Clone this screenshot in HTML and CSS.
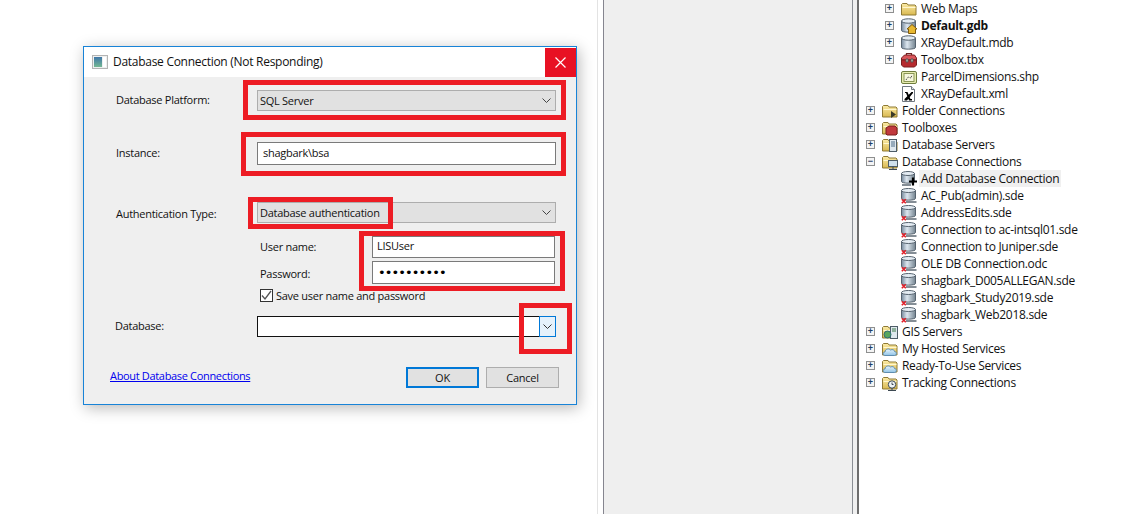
FILE: index.html
```html
<!DOCTYPE html>
<html>
<head>
  <title>Database Connection</title>
  <link rel="stylesheet" href="styles.css">
</head>
<body>
  <svg class="defs" width="0" height="0">
    <defs>
      <linearGradient id="gFolder" x1="0" y1="0" x2="0" y2="1">
        <stop offset="0" stop-color="#fbeba6"/><stop offset="1" stop-color="#d9b850"/>
      </linearGradient>
      <linearGradient id="gDb" x1="0" y1="0" x2="1" y2="0">
        <stop offset="0" stop-color="#76899c"/><stop offset=".4" stop-color="#dde7f0"/><stop offset="1" stop-color="#73838f"/>
      </linearGradient>
      <linearGradient id="gCloud" x1="0" y1="0" x2="0" y2="1">
        <stop offset="0" stop-color="#eaf5fc"/><stop offset="1" stop-color="#8fc3e6"/>
      </linearGradient>
      <linearGradient id="gApp" x1="0" y1="0" x2="0" y2="1">
        <stop offset="0" stop-color="#3f76a8"/><stop offset="1" stop-color="#74b893"/>
      </linearGradient>
      <symbol id="folder" viewBox="0 0 16 16">
        <path d="M.5 14V3.500l1-1h4.500l1 1.500h7l1 1v9z" fill="url(#gFolder)" stroke="#8f7a35"/>
        <path d="M1.500 6.500h13" stroke="#fff7cf" fill="none"/>
      </symbol>
      <symbol id="db" viewBox="0 0 16 16">
        <path d="M.5 3v9.500c0 2.200 14 2.200 14 0V3z" fill="url(#gDb)" stroke="#56636f"/>
        <ellipse cx="7.500" cy="3" rx="7" ry="2.200" fill="#e3ebf2" stroke="#56636f"/>
      </symbol>
      <symbol id="sde" viewBox="0 0 16 16">
        <path d="M.5 2.500v8c0 2.200 14 2.200 14 0v-8z" fill="url(#gDb)" stroke="#56636f"/>
        <ellipse cx="7.500" cy="2.500" rx="7" ry="2" fill="#e3ebf2" stroke="#56636f"/>
        <path d="M5 14h10.500" stroke="#66717b" stroke-width="1.600"/>
        <path d="M.8 11.300l4 4M4.800 11.300l-4 4" stroke="#e0202a" stroke-width="1.600"/>
      </symbol>
      <symbol id="addDb" viewBox="0 0 16 16">
        <path d="M.5 2.500v8c0 2.200 13 2.200 13 0v-8z" fill="url(#gDb)" stroke="#56636f"/>
        <ellipse cx="7" cy="2.500" rx="6.500" ry="2" fill="#e3ebf2" stroke="#56636f"/>
        <path d="M1 14h9" stroke="#66717b" stroke-width="1.600"/>
        <path d="M12 6.500v8M8 10.500h8" stroke="#000" stroke-width="2.200"/>
      </symbol>
      <symbol id="home" viewBox="0 0 16 16">
        <path d="M.5 3v9.500c0 2.200 14 2.200 14 0V3z" fill="url(#gDb)" stroke="#56636f"/>
        <ellipse cx="7.500" cy="3" rx="7" ry="2.200" fill="#e3ebf2" stroke="#56636f"/>
        <path d="M6 11L11 6.500 16 11h-1.500v4.500h-7V11z" fill="#e8b830" stroke="#7d5a10"/>
      </symbol>
      <symbol id="toolbox" viewBox="0 0 16 16">
        <path d="M5.500 3.500V1.500h5v2" fill="none" stroke="#6e2222" stroke-width="1.200"/>
        <path d="M.5 6l3-3h10l2 3v2H.5z" fill="#d9555a" stroke="#7a1f1f"/>
        <path d="M.5 8h15v5l-2 2h-11l-2-2z" fill="#b52a2e" stroke="#7a1f1f"/>
        <path d="M5 7h2v3H5zM10 7h2v3h-2z" fill="#e8e2d0" stroke="#555"/>
      </symbol>
      <symbol id="shp" viewBox="0 0 16 16">
        <rect x=".5" y="2.500" width="15" height="12" rx="1.500" fill="#e6ecb0" stroke="#6f7d3e"/>
        <rect x="3" y="4.500" width="10" height="8" fill="#f6f7de" stroke="#8a9556"/>
        <path d="M5 11l2-3 3 1 1-3" stroke="#333" stroke-dasharray="1 1" fill="none"/>
      </symbol>
      <symbol id="xml" viewBox="0 0 16 16">
        <path d="M1.500 .5h9l3 3v12h-12z" fill="#fff" stroke="#6f7780"/>
        <path d="M10.500 .5v3h3" fill="#dde3ea" stroke="#6f7780"/>
        <path d="M4 6h2.500l3 7H11v1.500H8L5 7H4zM10.500 6H12v1l-6 7.500H3.500V13z" fill="#000"/>
      </symbol>
      <symbol id="fConn" viewBox="0 0 16 16">
        <use href="#folder"/>
        <path d="M9 8l5 3.500-5 3.500z" fill="#3a3a28"/>
      </symbol>
      <symbol id="fTool" viewBox="0 0 16 16">
        <use href="#folder"/>
        <path d="M4 8l3-2h6l2 2v6l-1 1H5l-1-1z" fill="#c13a3e" stroke="#7a1f1f"/>
      </symbol>
      <symbol id="fServ" viewBox="0 0 16 16">
        <use href="#folder"/>
        <rect x="7.500" y="2.500" width="7" height="12" fill="#dfe8ee" stroke="#4e5d68"/>
        <path d="M9 5h4M9 7h4M9 9h4" stroke="#4e6f88"/>
      </symbol>
      <symbol id="fDb" viewBox="0 0 16 16">
        <use href="#folder"/>
        <rect x="6.500" y="6.500" width="9" height="6" fill="#cfe0ec" stroke="#4e5d68"/>
        <path d="M11 12.500V15M7 15.500h8" stroke="#3c4852"/>
      </symbol>
      <symbol id="fGis" viewBox="0 0 16 16">
        <use href="#folder"/>
        <rect x="8.500" y="2.500" width="7" height="12" fill="#dfe8ee" stroke="#4e5d68"/>
        <path d="M10 5h4M10 7h4" stroke="#3e7a4a"/>
        <circle cx="5.500" cy="10.500" r="3.500" fill="#5aa65c" stroke="#2f6a78"/>
      </symbol>
      <symbol id="fCloud" viewBox="0 0 16 16">
        <use href="#folder"/>
        <path d="M3 14.500c-2.500 0-2.500-3.500 0-3.500 0-3 4-4 5.500-2 2-1 4 0 4 1.500 2.500 0 2.500 4 0 4z" fill="url(#gCloud)" stroke="#5f8db0"/>
      </symbol>
      <symbol id="fTrack" viewBox="0 0 16 16">
        <use href="#folder"/>
        <circle cx="10" cy="9.500" r="3.700" fill="#eef3f6" stroke="#3c4852"/>
        <path d="M10 7.500v2h1.500" stroke="#3c4852" fill="none"/>
        <path d="M10 13v2M6 15.500h8" stroke="#3c4852"/>
      </symbol>
    </defs>
  </svg>

  <div class="desktop">
    <div class="blank"></div>
    <div class="gap"></div>
    <div class="panel"></div>
    <div class="sash"></div>

    <div class="tree">
      <div class="node sub"><span class="exp">+</span><svg class="ic"><use href="#folder"/></svg><span>Web Maps</span></div>
      <div class="node sub"><span class="exp">+</span><svg class="ic"><use href="#home"/></svg><b>Default.gdb</b></div>
      <div class="node sub"><span class="exp">+</span><svg class="ic"><use href="#db"/></svg><span>XRayDefault.mdb</span></div>
      <div class="node sub"><span class="exp">+</span><svg class="ic"><use href="#toolbox"/></svg><span>Toolbox.tbx</span></div>
      <div class="node sub"><span class="exp none"></span><svg class="ic"><use href="#shp"/></svg><span>ParcelDimensions.shp</span></div>
      <div class="node sub"><span class="exp none"></span><svg class="ic"><use href="#xml"/></svg><span>XRayDefault.xml</span></div>
      <div class="node"><span class="exp">+</span><svg class="ic"><use href="#fConn"/></svg><span>Folder Connections</span></div>
      <div class="node"><span class="exp">+</span><svg class="ic"><use href="#fTool"/></svg><span>Toolboxes</span></div>
      <div class="node"><span class="exp">+</span><svg class="ic"><use href="#fServ"/></svg><span>Database Servers</span></div>
      <div class="node"><span class="exp">&minus;</span><svg class="ic"><use href="#fDb"/></svg><span>Database Connections</span></div>
      <div class="node sub"><span class="exp none"></span><svg class="ic"><use href="#addDb"/></svg><span class="hover">Add Database Connection</span></div>
      <div class="node sub"><span class="exp none"></span><svg class="ic"><use href="#sde"/></svg><span>AC_Pub(admin).sde</span></div>
      <div class="node sub"><span class="exp none"></span><svg class="ic"><use href="#sde"/></svg><span>AddressEdits.sde</span></div>
      <div class="node sub"><span class="exp none"></span><svg class="ic"><use href="#sde"/></svg><span>Connection to ac-intsql01.sde</span></div>
      <div class="node sub"><span class="exp none"></span><svg class="ic"><use href="#sde"/></svg><span>Connection to Juniper.sde</span></div>
      <div class="node sub"><span class="exp none"></span><svg class="ic"><use href="#sde"/></svg><span>OLE DB Connection.odc</span></div>
      <div class="node sub"><span class="exp none"></span><svg class="ic"><use href="#sde"/></svg><span>shagbark_D005ALLEGAN.sde</span></div>
      <div class="node sub"><span class="exp none"></span><svg class="ic"><use href="#sde"/></svg><span>shagbark_Study2019.sde</span></div>
      <div class="node sub"><span class="exp none"></span><svg class="ic"><use href="#sde"/></svg><span>shagbark_Web2018.sde</span></div>
      <div class="node"><span class="exp">+</span><svg class="ic"><use href="#fGis"/></svg><span>GIS Servers</span></div>
      <div class="node"><span class="exp">+</span><svg class="ic"><use href="#fCloud"/></svg><span>My Hosted Services</span></div>
      <div class="node"><span class="exp">+</span><svg class="ic"><use href="#fCloud"/></svg><span>Ready-To-Use Services</span></div>
      <div class="node"><span class="exp">+</span><svg class="ic"><use href="#fTrack"/></svg><span>Tracking Connections</span></div>
    </div>

    <div class="dialog">
      <div class="titlebar">
        <svg class="appicon" width="16" height="14" viewBox="0 0 16 14">
          <rect x=".5" y=".5" width="15" height="13" fill="#eef0f0" stroke="#b4b4b4"/>
          <rect x="2" y="2" width="8" height="10" fill="url(#gApp)"/>
          <rect x="11" y="2" width="3" height="10" fill="#fff"/>
        </svg>
        <span class="title">Database Connection (Not Responding)</span>
        <div class="close">
          <svg width="11" height="11" viewBox="0 0 11 11"><path d="M.5 .5l10 10M10.500 .5l-10 10" stroke="#fff" stroke-width="1.200"/></svg>
        </div>
      </div>
      <div class="content">
        <div class="row r-platform">
          <label class="lbl up">Database Platform:</label>
          <div class="select">SQL Server<svg class="chev" width="9" height="5" viewBox="0 0 9 5"><path d="M.5 .5l4 4 4-4" fill="none" stroke="#444"/></svg></div>
        </div>
        <div class="row r-instance">
          <label class="lbl nudge">Instance:</label>
          <input class="field" type="text" value="shagbark\bsa">
        </div>
        <div class="row r-auth">
          <label class="lbl down">Authentication Type:</label>
          <div class="select">Database authentication<svg class="chev" width="9" height="5" viewBox="0 0 9 5"><path d="M.5 .5l4 4 4-4" fill="none" stroke="#444"/></svg></div>
        </div>
        <div class="subrow r-user">
          <label class="sublbl">User name:</label>
          <input class="field" type="text" value="LISUser">
        </div>
        <div class="subrow r-pass">
          <label class="sublbl">Password:</label>
          <input class="field pass" type="password" value="aaaaaaaaaa">
        </div>
        <div class="r-save">
          <span class="check"><svg width="11" height="11" viewBox="0 0 11 11"><path d="M1 5.500l3 3.500 6-8" fill="none" stroke="#555" stroke-width="1.300"/></svg></span>
          <span>Save user name and password</span>
        </div>
        <div class="row r-db">
          <label class="lbl dblbl">Database:</label>
          <div class="combo">
            <input class="dbinput" type="text">
            <div class="dropbtn"><svg width="9" height="5" viewBox="0 0 9 5"><path d="M.5 .5l4 4 4-4" fill="none" stroke="#333"/></svg></div>
          </div>
        </div>
        <div class="footer">
          <div class="about-wrap"><a class="about" href="#">About Database Connections</a></div>
          <button class="btn ok">OK</button>
          <button class="btn cancel">Cancel</button>
        </div>
      </div>
    </div>

    <div class="mark m1"></div>
    <div class="mark m2"></div>
    <div class="mark m3"></div>
    <div class="mark m4"></div>
    <div class="mark m5"></div>
  </div>
</body>
</html>
```

FILE: styles.css
```css
* {
  box-sizing: border-box;
}

body {
  margin: 0;
  background: #fff;
  font-family: "Open Sans", "Noto Sans", sans-serif;
  font-size: 12px;
  color: #111;
}

.defs {
  position: absolute;
}

.desktop {
  position: relative;
  display: flex;
  width: 1127px;
  height: 514px;
  overflow: hidden;
}

/* background columns */
.blank {
  width: 597px;
}

.gap {
  width: 6px;
  border-left: 1px solid #e3e3e3;
}

.panel {
  width: 250px;
  background: #efefef;
  border-left: 1px solid #85858f;
  border-right: 1px solid #8a8e94;
}

.sash {
  width: 6px;
  background: #f0f0f0;
  border-right: 2px solid #6e6e6e;
}

/* tree */
.tree {
  flex: 1;
  padding-left: 7px;
}

.node {
  display: flex;
  align-items: center;
  height: 17px;
  white-space: nowrap;
  letter-spacing: -0.3px;
}

.node.sub {
  padding-left: 19px;
}

.exp {
  width: 9px;
  height: 9px;
  margin-right: 7px;
  border: 1px solid #8e8f8f;
  background: #f4f4f4;
  color: #1f3f66;
  font: bold 9px/7px "Liberation Sans", sans-serif;
  text-align: center;
  letter-spacing: 0;
}

.exp.none {
  visibility: hidden;
}

.ic {
  width: 16px;
  height: 16px;
  margin-right: 4px;
  flex: none;
}

.hover {
  margin: 0 -2px;
  padding: 0 2px;
  line-height: 17px;
  background: #f0f0f0;
}

/* dialog */
.dialog {
  position: absolute;
  left: 83px;
  top: 46px;
  width: 494px;
  height: 359px;
  background: #efefef;
  border: 1px solid #1883d7;
  box-shadow: 2px 3px 14px rgba(0, 0, 0, 0.28);
}

.titlebar {
  display: flex;
  align-items: center;
  height: 30px;
  background: #fff;
  padding-left: 8px;
}

.appicon {
  margin-right: 5px;
}

.title {
  flex: 1;
  padding-bottom: 1px;
  letter-spacing: -0.28px;
}

.close {
  display: flex;
  align-items: center;
  justify-content: center;
  width: 31px;
  height: 29px;
  background: #e81123;
}

.content {
  padding-left: 32px;
  font-size: 11px;
  letter-spacing: -0.27px;
}

.row {
  display: flex;
  align-items: center;
}

.lbl {
  width: 141px;
}

.lbl.up {
  padding-bottom: 3px;
}

.lbl.nudge {
  padding-bottom: 2px;
}

.lbl.down {
  padding-top: 2px;
}

.dblbl {
  margin-left: -1px;
  width: 142px;
  padding-bottom: 2px;
}

.select {
  display: flex;
  align-items: center;
  justify-content: space-between;
  width: 299px;
  height: 21px;
  padding: 0 4px 0 2px;
  background: #e1e1e1;
  border: 1px solid #adadad;
}

.field {
  height: 100%;
  margin: 0;
  padding: 0 4px;
  background: #fff;
  border: 1px solid #7a7a7a;
  outline: none;
  font: inherit;
  letter-spacing: inherit;
  color: #111;
}

.r-platform {
  margin-top: 13px;
  height: 21px;
}

.r-instance {
  margin-top: 31px;
  height: 23px;
}

.r-instance .field {
  width: 299px;
  padding: 0 4px 2px 5px;
}

.r-auth {
  margin-top: 37px;
  height: 21px;
}

.subrow {
  display: flex;
  align-items: center;
  padding-left: 144px;
}

.sublbl {
  width: 112px;
}

.subrow .field {
  width: 183px;
}

.r-user {
  margin-top: 13px;
  height: 22px;
}

.r-user .sublbl {
  padding-bottom: 2px;
}

.r-user .field {
  padding-bottom: 3px;
}

.r-pass {
  margin-top: 3px;
  height: 23px;
}

.r-pass .sublbl {
  padding-top: 2px;
}

.subrow .pass {
  padding: 0 4px 1px 5px;
  font-family: "DejaVu Sans", sans-serif;
  font-size: 13px;
  letter-spacing: -0.9px;
  color: #000;
}

.r-save {
  display: flex;
  align-items: center;
  height: 13px;
  margin-top: 5px;
  padding-left: 144px;
}

.check {
  display: flex;
  align-items: center;
  justify-content: center;
  width: 13px;
  height: 13px;
  margin-right: 3px;
  background: #fff;
  border: 1px solid #333;
}

.r-db {
  margin-top: 14px;
  height: 21px;
}

.combo {
  display: flex;
  width: 299px;
  height: 21px;
}

.dbinput {
  flex: 1;
  min-width: 0;
  margin: 0;
  border: 1px solid #111;
  border-right: none;
  outline: none;
  background: #fff;
}

.dropbtn {
  display: flex;
  align-items: center;
  justify-content: center;
  width: 17px;
  background: #e5f1fb;
  border: 1px solid #0078d7;
}

.footer {
  display: flex;
  align-items: center;
  height: 21px;
  margin-top: 30px;
  margin-left: -6px;
}

.about-wrap {
  width: 296px;
  padding-bottom: 4px;
}

.about {
  color: #0000ee;
  letter-spacing: -0.33px;
}

.btn {
  width: 73px;
  height: 21px;
  margin: 0;
  padding: 0;
  background: #e1e1e1;
  border: 1px solid #adadad;
  font: inherit;
  letter-spacing: inherit;
  color: #111;
}

.ok {
  margin-right: 7px;
  border: 2px solid #0078d7;
}

/* red annotation boxes */
.mark {
  position: absolute;
  border: 5px solid #ed1c24;
}

.m1 {
  left: 243px;
  top: 80px;
  width: 323px;
  height: 40px;
}

.m2 {
  left: 241px;
  top: 132px;
  width: 325px;
  height: 44px;
}

.m3 {
  left: 248px;
  top: 197px;
  width: 145px;
  height: 32px;
}

.m4 {
  left: 359px;
  top: 231px;
  width: 206px;
  height: 60px;
}

.m5 {
  left: 519px;
  top: 303px;
  width: 53px;
  height: 51px;
}
```
